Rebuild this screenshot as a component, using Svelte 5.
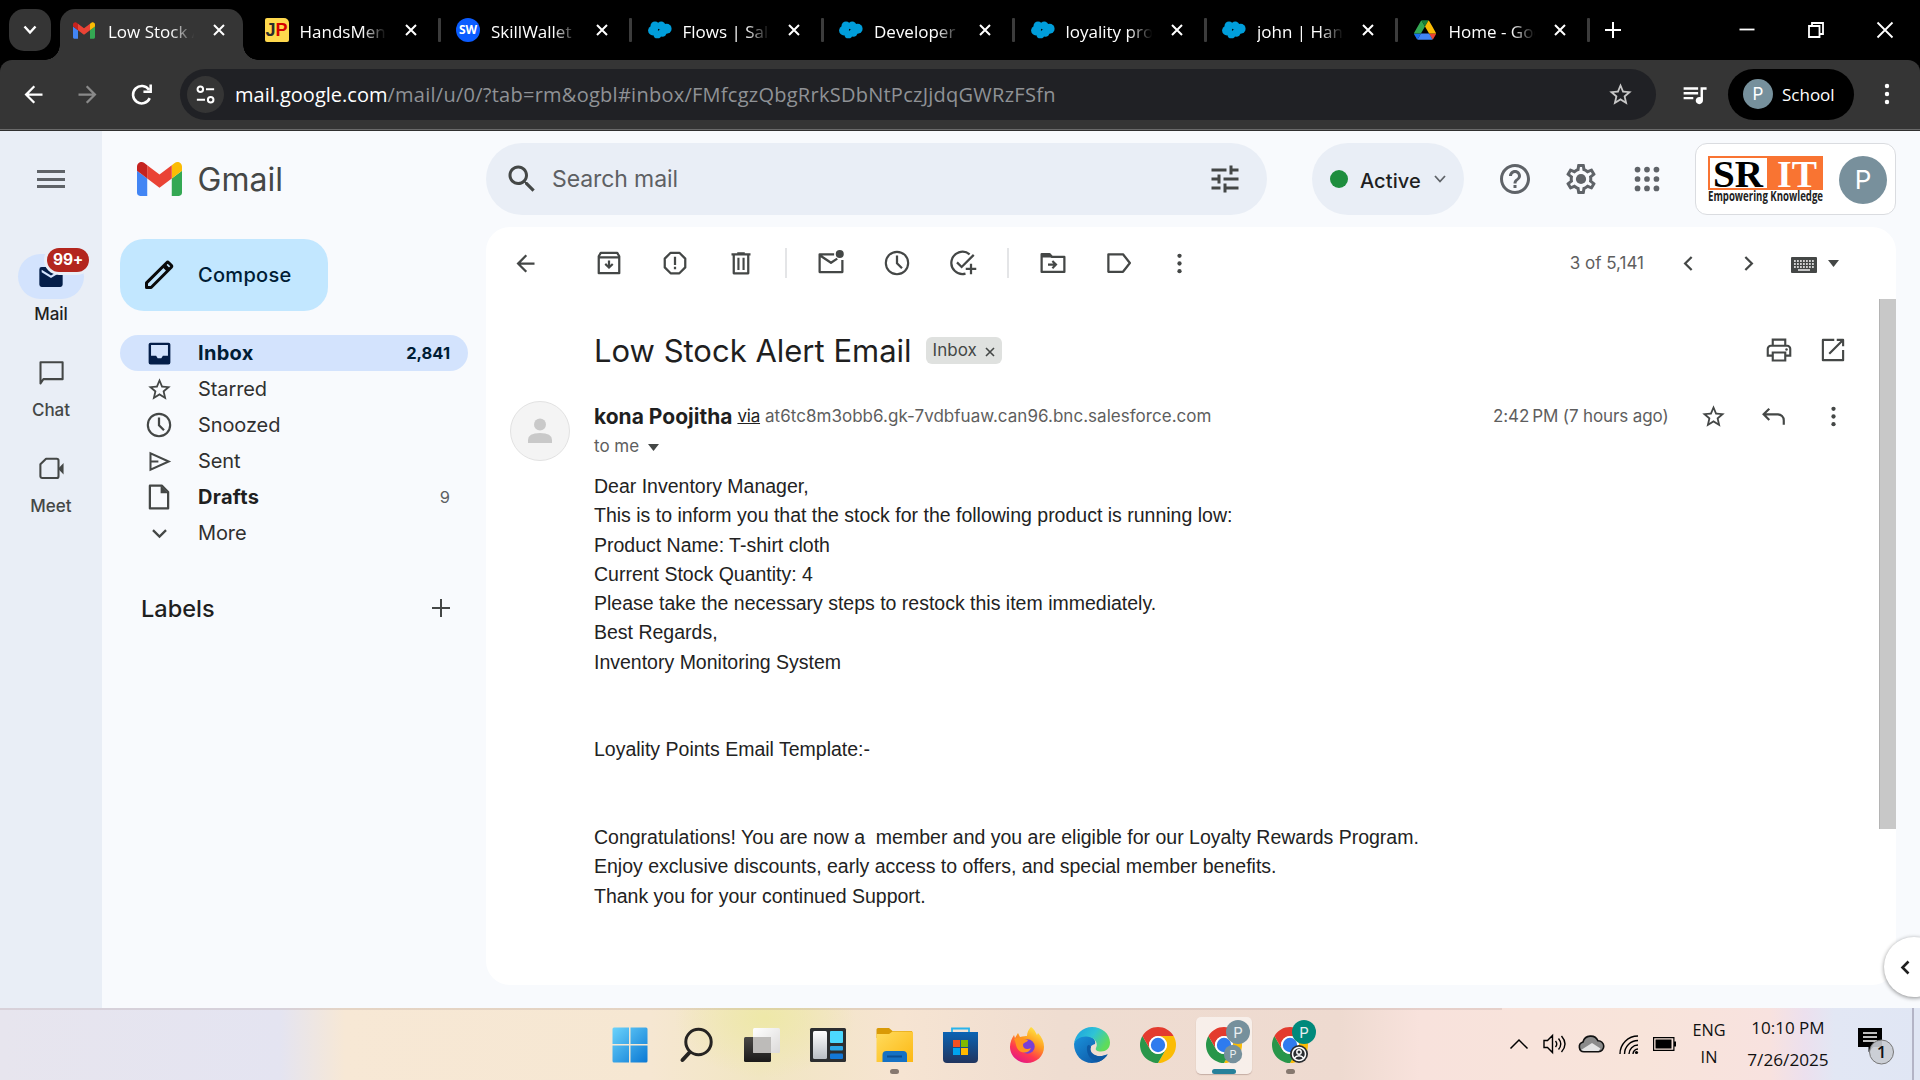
<script>
  const tabs = [
    { icon: 'gmail', title: 'Low Stock Alert', active: true },
    { icon: 'jp', title: 'HandsMen T' },
    { icon: 'sw', title: 'SkillWallet' },
    { icon: 'cloud', title: 'Flows | Salesforce' },
    { icon: 'cloud', title: 'Developer C' },
    { icon: 'cloud', title: 'loyality process' },
    { icon: 'cloud', title: 'john | Hands' },
    { icon: 'drive', title: 'Home - Google' },
  ];

  const folders = [
    { icon: 'inbox', name: 'Inbox', count: '2,841', selected: true, bold: true },
    { icon: 'star', name: 'Starred' },
    { icon: 'clock', name: 'Snoozed' },
    { icon: 'send', name: 'Sent' },
    { icon: 'draft', name: 'Drafts', count: '9', bold: true },
    { icon: 'down', name: 'More' },
  ];

  const actions = ['archive', 'spam', 'trash', '|', 'unread', 'clock', 'task', '|', 'move', 'label', 'dots'];

  const body = [
    'Dear Inventory Manager,',
    'This is to inform you that the stock for the following product is running low:',
    'Product Name: T-shirt cloth',
    'Current Stock Quantity: 4',
    'Please take the necessary steps to restock this item immediately.',
    'Best Regards,',
    'Inventory Monitoring System',
    '',
    '',
    'Loyality Points Email Template:-',
    '',
    '',
    'Congratulations! You are now a  member and you are eligible for our Loyalty Rewards Program.',
    'Enjoy exclusive discounts, early access to offers, and special member benefits.',
    'Thank you for your continued Support.',
  ];

  const apps = ['windows', 'find', 'taskview', 'widgets', 'files', 'store', 'firefox', 'edge', 'chrome', 'chromeA', 'chromeB'];
</script>

{#snippet gmail()}
  <path fill="#4285f4" d="M58 108h14V74L52 59v43c0 3.32 2.69 6 6 6" />
  <path fill="#34a853" d="M120 108h14c3.32 0 6-2.69 6-6V59l-20 15" />
  <path fill="#fbbc04" d="M120 48v26l20-15v-8c0-7.42-8.47-11.65-14.4-7.2" />
  <path fill="#ea4335" d="M72 74V48l24 18 24-18v26L96 92" />
  <path fill="#c5221f" d="M52 51v8l20 15V48l-5.6-4.2c-5.94-4.45-14.4-.22-14.4 7.2" />
{/snippet}

{#snippet favicon(name)}
  {#if name === 'gmail'}
    <svg width="22" height="17" viewBox="52 42 88 66">{@render gmail()}</svg>
  {:else if name === 'jp'}
    <span class="jp"><b>J</b><b class="p">P</b></span>
  {:else if name === 'sw'}
    <span class="sw">SW</span>
  {:else if name === 'cloud'}
    <svg width="24" height="18" viewBox="0 0 24 18" fill="#009edb">
      <circle cx="5" cy="9.6" r="4.9" /><circle cx="7" cy="5" r="4.5" /><circle cx="13.2" cy="4.6" r="4.2" />
      <circle cx="18.6" cy="7.8" r="5" /><circle cx="14.4" cy="11.6" r="4.2" /><circle cx="9.4" cy="13.4" r="3.9" />
    </svg>
  {:else}
    <svg width="22" height="20" viewBox="0 0 87.3 78">
      <path fill="#1a6ff0" d="m6.6 66.85 3.85 6.65c.8 1.4 1.95 2.5 3.3 3.3l13.75-23.8H0c0 1.55.4 3.1 1.2 4.5z" />
      <path fill="#34a853" d="M43.65 25 29.9 1.2c-1.35.8-2.5 1.9-3.3 3.3l-25.4 44A9.06 9.06 0 0 0 0 53h27.5z" />
      <path fill="#ea4335" d="M73.55 76.8c1.35-.8 2.5-1.9 3.3-3.3l1.6-2.75L86.1 57.5c.8-1.4 1.2-2.95 1.2-4.5H59.8l5.85 11.5z" />
      <path fill="#188038" d="M43.65 25 57.4 1.2C56.05.4 54.5 0 52.9 0H34.4c-1.6 0-3.15.45-4.5 1.2z" />
      <path fill="#4285f4" d="M59.8 53H27.5L13.75 76.8c1.35.8 2.9 1.2 4.5 1.2h50.8c1.6 0 3.15-.45 4.5-1.2z" />
      <path fill="#fbbc04" d="m73.4 26.5-12.7-22c-.8-1.4-1.95-2.5-3.3-3.3L43.65 25 59.8 53h27.45c0-1.55-.4-3.1-1.2-4.5z" />
    </svg>
  {/if}
{/snippet}

{#snippet icon(name, size = 30)}
  <svg width={size} height={size} viewBox="0 0 24 24" fill="currentColor">
    {#if name === 'star'}
      <path d="M22 9.24l-7.19-.62L12 2 9.19 8.63 2 9.24l5.46 4.73L5.82 21 12 17.27 18.18 21l-1.63-7.03L22 9.24zM12 15.4l-3.76 2.27 1-4.28-3.32-2.88 4.38-.38L12 6.1l1.71 4.04 4.38.38-3.32 2.88 1 4.28L12 15.4z" />
    {:else if name === 'back'}
      <path d="M20 11H7.83l5.59-5.59L12 4l-8 8 8 8 1.41-1.41L7.83 13H20v-2z" />
    {:else if name === 'forward'}
      <path d="M4 11h12.17l-5.59-5.59L12 4l8 8-8 8-1.41-1.41L16.17 13H4v-2z" />
    {:else if name === 'reload'}
      <path fill="none" stroke="currentColor" stroke-width="2.1" d="M18.8 15a7.2 7.2 0 1 1-.6-6.8M19.6 3.8v6h-6" />
    {:else if name === 'site'}
      <path fill="none" stroke="currentColor" stroke-width="2.1" d="M12.5 6.5H21M3 17.5h8.5" />
      <circle cx="6.6" cy="6.5" r="2.9" fill="none" stroke="currentColor" stroke-width="2.1" />
      <circle cx="17.4" cy="17.5" r="2.9" fill="none" stroke="currentColor" stroke-width="2.1" />
    {:else if name === 'music'}
      <path d="M15 6H3v2h12V6zm0 4H3v2h12v-2zM3 16h8v-2H3v2zM17 6v8.18c-.31-.11-.65-.18-1-.18-1.66 0-3 1.34-3 3s1.34 3 3 3 3-1.34 3-3V8h3V6h-5z" />
    {:else if name === 'dots'}
      <circle cx="12" cy="5.2" r="1.9" /><circle cx="12" cy="12" r="1.9" /><circle cx="12" cy="18.8" r="1.9" />
    {:else if name === 'search'}
      <path d="M15.5 14h-.79l-.28-.27C15.41 12.59 16 11.11 16 9.5 16 5.91 13.09 3 9.5 3S3 5.91 3 9.5 5.91 16 9.5 16c1.61 0 3.09-.59 4.23-1.57l.27.28v.79l5 4.99L20.49 19l-4.99-5zm-6 0C7.01 14 5 11.99 5 9.5S7.01 5 9.5 5 14 7.01 14 9.5 11.99 14 9.5 14z" />
    {:else if name === 'tune'}
      <path d="M3 17v2h6v-2H3zM3 5v2h10V5H3zm10 16v-2h8v-2h-8v-2h-2v6h2zM7 9v2H3v2h4v2h2V9H7zm14 4v-2H11v2h10zm-6-4h2V7h4V5h-4V3h-2v6z" />
    {:else if name === 'help'}
      <path d="M11 18h2v-2h-2v2zm1-16C6.48 2 2 6.48 2 12s4.48 10 10 10 10-4.48 10-10S17.52 2 12 2zm0 18c-4.41 0-8-3.59-8-8s3.59-8 8-8 8 3.59 8 8-3.59 8-8 8zm0-14c-2.21 0-4 1.79-4 4h2c0-1.1.9-2 2-2s2 .9 2 2c0 2-3 1.75-3 5h2c0-2.25 3-2.5 3-5 0-2.21-1.79-4-4-4z" />
    {:else if name === 'gear'}
      <path d="M19.43 12.98c.04-.32.07-.64.07-.98 0-.34-.03-.66-.07-.98l2.11-1.65c.19-.15.24-.42.12-.64l-2-3.46c-.09-.16-.26-.25-.44-.25-.06 0-.12.01-.17.03l-2.49 1c-.52-.4-1.08-.73-1.69-.98l-.38-2.65C14.46 2.18 14.25 2 14 2h-4c-.25 0-.46.18-.49.42l-.38 2.65c-.61.25-1.17.59-1.69.98l-2.49-1c-.06-.02-.12-.03-.18-.03-.17 0-.34.09-.43.25l-2 3.46c-.13.22-.07.49.12.64l2.11 1.65c-.04.32-.07.65-.07.98 0 .33.03.66.07.98l-2.11 1.65c-.19.15-.24.42-.12.64l2 3.46c.09.16.26.25.44.25.06 0 .12-.01.17-.03l2.49-1c.52.4 1.08.73 1.69.98l.38 2.65c.03.24.24.42.49.42h4c.25 0 .46-.18.49-.42l.38-2.65c.61-.25 1.17-.59 1.69-.98l2.49 1c.06.02.12.03.18.03.17 0 .34-.09.43-.25l2-3.46c.12-.22.07-.49-.12-.64l-2.11-1.65zm-1.98-1.71c.04.31.05.52.05.73 0 .21-.02.43-.05.73l-.14 1.13.89.7 1.08.84-.7 1.21-1.27-.51-1.04-.42-.9.68c-.43.32-.84.56-1.25.73l-1.06.43-.16 1.13-.2 1.35h-1.4l-.19-1.35-.16-1.13-1.06-.43c-.43-.18-.83-.41-1.23-.71l-.91-.7-1.06.43-1.27.51-.7-1.21 1.08-.84.89-.7-.14-1.13c-.03-.31-.05-.54-.05-.74s.02-.43.05-.73l.14-1.13-.89-.7-1.08-.84.7-1.21 1.27.51 1.04.42.9-.68c.43-.32.84-.56 1.25-.73l1.06-.43.16-1.13.2-1.35h1.39l.19 1.35.16 1.13 1.06.43c.43.18.83.41 1.23.71l.91.7 1.06-.43 1.27-.51.7 1.21-1.07.85-.89.7.14 1.13z" />
      <circle cx="12" cy="12" r="3.4" />
    {:else if name === 'grid'}
      {#each [5.7, 12, 18.3] as y}{#each [5.7, 12, 18.3] as x}<circle cx={x} cy={y} r="1.9" />{/each}{/each}
    {:else if name === 'inbox'}
      <path fill-rule="evenodd" d="M4.6 3h14.8A1.6 1.6 0 0 1 21 4.6v14.8a1.6 1.6 0 0 1-1.6 1.6H4.6A1.6 1.6 0 0 1 3 19.4V4.6A1.6 1.6 0 0 1 4.6 3zM5 5v8.8h4.2l1.3 2.2h3l1.3-2.2H19V5z" />
    {:else if name === 'clock'}
      <path d="M12 2.2a9.8 9.8 0 1 0 0 19.6 9.8 9.8 0 0 0 0-19.6zm0 17.9a8.1 8.1 0 1 1 0-16.2 8.1 8.1 0 0 1 0 16.2z" />
      <path fill="none" stroke="currentColor" stroke-width="1.8" d="M12 6v6.2l4 4" />
    {:else if name === 'send'}
      <path fill="none" stroke="currentColor" stroke-width="1.8" d="M4 4.8v14.4L20.2 12zM4 12h7" />
    {:else if name === 'draft'}
      <path fill="none" stroke="currentColor" stroke-width="1.8" stroke-linejoin="round" d="M4.7 2.9h9.5l5.1 5.1v13.1H4.7z" />
      <path d="M13.3 2.9v6h6z" />
    {:else if name === 'down'}
      <path fill="none" stroke="currentColor" stroke-width="2" d="M6.2 9l5.8 5.8L17.800 9" />
    {:else if name === 'plus'}
      <path d="M11.2 4.8h1.6v6.4h6.4v1.6h-6.4v6.4h-1.6v-6.4H4.8v-1.6h6.4z" />
    {:else if name === 'mail'}
      <path fill-rule="evenodd" d="M4 3.500h16a2 2 0 0 1 2 2v13a2 2 0 0 1-2 2H4a2 2 0 0 1-2-2v-13a2 2 0 0 1 2-2zM4 5.800v2.100l8 5 8-5V5.800l-8 4.900z" />
    {:else if name === 'chat'}
      <path fill="none" stroke="currentColor" stroke-width="1.7" stroke-linejoin="round" d="M2.900 21V3.500h18.300v14H5.300z" />
    {:else if name === 'meet'}
      <path fill="none" stroke="currentColor" stroke-width="1.7" stroke-linejoin="round" d="M7.500 3.900h8.800a1.500 1.500 0 0 1 1.500 1.500v13a1.500 1.500 0 0 1-1.500 1.500H4.300a1.500 1.500 0 0 1-1.500-1.500V8.500z" />
      <path d="M17.400 12.200L22 7.400v9.600z" />
    {:else if name === 'archive'}
      <path fill="none" stroke="currentColor" stroke-width="1.8" stroke-linejoin="round" d="M3.800 6.600l1.600-2.700h13.200l1.600 2.700v13.500H3.800zM3.800 7.400h16.400" />
      <path d="M11.100 10h1.800v3.600l1.500-1.500 1.200 1.200-3.600 3.500-3.600-3.500 1.200-1.200 1.500 1.500z" />
    {:else if name === 'spam'}
      <path fill="none" stroke="currentColor" stroke-width="1.8" stroke-linejoin="round" d="M8.500 3.800h7l4.700 4.700v7l-4.700 4.700h-7l-4.700-4.700v-7z" />
      <path d="M11.100 7h1.800v6.500h-1.800zM11.100 15h1.800v2h-1.800z" />
    {:else if name === 'trash'}
      <path fill="none" stroke="currentColor" stroke-width="1.8" stroke-linejoin="round" d="M6.200 5.500v14.700h11.600V5.500M4.400 5h15.200M9 4.200h6" />
      <path d="M9.100 7.800h1.700v9.800H9.100zM13.200 7.800h1.700v9.800h-1.700z" />
    {:else if name === 'unread'}
      <path fill="none" stroke="currentColor" stroke-width="1.8" stroke-linejoin="round" d="M14.500 5H2.900v14.200h18.200V9.500M3 5.800l9 6 5-3.300" />
      <circle cx="19" cy="4.800" r="3.200" />
    {:else if name === 'task'}
      <path fill="none" stroke="currentColor" stroke-width="1.8" d="M17.300 5.100A8.900 8.900 0 1 0 14 20.500M7.200 11.500l3.700 3.700L20.600 5.500M18.400 12.500v8.400M14.200 16.700h8.400" />
    {:else if name === 'move'}
      <path fill="none" stroke="currentColor" stroke-width="1.8" stroke-linejoin="round" d="M2.900 4.900h6.300l2 2.200h9.900v12H2.900z" />
      <path d="M2.900 4.900h6.300l2 2.700H2.900zM8 12.300h4.300l-1.400-1.400 1.200-1.200 3.500 3.500-3.500 3.500-1.200-1.200 1.400-1.400H8z" />
    {:else if name === 'label'}
      <path fill="none" stroke="currentColor" stroke-width="1.8" stroke-linejoin="round" d="M3.500 5h11.700l5.500 7-5.500 7H3.500z" />
    {:else if name === 'left'}
      <path fill="none" stroke="currentColor" stroke-width="2" d="M14.800 6.200L9 12l5.800 5.800" />
    {:else if name === 'right'}
      <path fill="none" stroke="currentColor" stroke-width="2" d="M9.200 6.200L15 12l-5.800 5.800" />
    {:else if name === 'print'}
      <path fill="none" stroke="currentColor" stroke-width="1.7" d="M7 8V3.700h10V8M6.500 16.500H3V11a2.400 2.400 0 0 1 2.400-2.400h13.200A2.400 2.400 0 0 1 21 11v5.500h-3.500M7 14h10v6.400H7z" />
      <circle cx="18" cy="11.600" r="1" />
    {:else if name === 'open'}
      <path fill="none" stroke="currentColor" stroke-width="1.7" stroke-linejoin="round" d="M13 3.900H3.900v16.200h16.200V12M15 3.900h5.100V9M20 4L9 15" />
    {:else if name === 'reply'}
      <path fill="none" stroke="currentColor" stroke-width="1.8" d="M8.500 5.500L3.800 10.200l4.700 4.700M3.800 10.200h11.700a5 5 0 0 1 5 5v3.600" />
    {/if}
  </svg>
{/snippet}

{#snippet close()}
  <svg width="12" height="12" viewBox="0 0 12 12" stroke="#fff" stroke-width="2"><path d="M1 1l10 10M11 1L1 11" /></svg>
{/snippet}

{#snippet chromeDisc()}
  <path fill="#fbbc04" d="M24 12h20.780A24 24 0 0 1 24 48l10.390-18A12 12 0 0 0 24 12z" />
  <path fill="#28964a" d="M34.390 30L24 48A24 24 0 0 1 3.220 12l10.390 18a12 12 0 0 0 20.780 0z" />
  <path fill="#e33b2e" d="M13.610 30L3.220 12a24 24 0 0 1 41.560 0H24a12 12 0 0 0-10.390 18z" />
  <circle cx="24" cy="24" r="12" fill="#fff" />
  <circle cx="24" cy="24" r="9.600" fill="#2f7bee" />
{/snippet}

{#snippet app(name)}
  {#if name === 'windows'}
    <svg width="36" height="36" viewBox="0 0 36 36">
      <defs><linearGradient id="win" x1="0" y1="0" x2="1" y2="1"><stop offset="0" stop-color="#6bd3fb" /><stop offset="1" stop-color="#0a78d4" /></linearGradient></defs>
      <path fill="url(#win)" d="M2 .5h15v16.500H.5V2A1.500 1.500 0 0 1 2 .5zM18.500.5H34A1.500 1.500 0 0 1 35.500 2v15h-17zM.5 18.500H17v17H2A1.500 1.500 0 0 1 .5 34zM18.500 18.500h17V34a1.500 1.500 0 0 1-1.500 1.500H18.500z" />
    </svg>
  {:else if name === 'find'}
    <svg width="34" height="36" viewBox="0 0 34 36" fill="none" stroke="#262422">
      <circle cx="19.500" cy="15" r="12.700" stroke-width="3" /><path stroke-width="4" stroke-linecap="round" d="M10.500 25.500L3.500 33" />
    </svg>
  {:else if name === 'taskview'}
    <svg width="36" height="36" viewBox="0 0 36 36">
      <defs>
        <linearGradient id="tv1" x1="0" y1="0" x2="0" y2="1"><stop offset="0" stop-color="#4a4846" /><stop offset="1" stop-color="#1b1a19" /></linearGradient>
        <linearGradient id="tv2" x1="0" y1="0" x2="1" y2="1"><stop offset="0" stop-color="#fff" /><stop offset="1" stop-color="#dcdad9" /></linearGradient>
      </defs>
      <rect x="0" y="10" width="27" height="25" rx="1.500" fill="url(#tv1)" />
      <rect x="9" y="1" width="27" height="25" rx="1.500" fill="url(#tv2)" />
      <path fill="#bdbbb9" d="M9 10h18v16H10.500A1.500 1.500 0 0 1 9 24.500z" />
    </svg>
  {:else if name === 'widgets'}
    <svg width="36" height="34" viewBox="0 0 36 34">
      <defs><linearGradient id="wd" x1="0" y1="0" x2="0" y2="1"><stop offset="0" stop-color="#fff" /><stop offset="1" stop-color="#b9bec4" /></linearGradient></defs>
      <rect width="36" height="34" rx="1.500" fill="#2c2e30" />
      <rect x="3" y="3" width="14" height="28" rx="1.500" fill="url(#wd)" />
      <rect x="20" y="3" width="13" height="12" rx="1" fill="#4cd9ff" /><rect x="20" y="18" width="13" height="4.500" rx="1" fill="#2ba8e8" /><rect x="20" y="25.500" width="13" height="5.500" rx="1" fill="#1277d6" />
    </svg>
  {:else if name === 'files'}
    <svg width="37" height="34" viewBox="0 0 37 34">
      <defs><linearGradient id="fl" x1="0" y1="0" x2="1" y2="1"><stop offset="0" stop-color="#ffdc5e" /><stop offset="1" stop-color="#fdb813" /></linearGradient></defs>
      <path fill="#d99a06" d="M2 0h11l3.500 3H36v7H.5V1.500A1.500 1.500 0 0 1 2 0z" />
      <path fill="url(#fl)" d="M.5 6H13l3.500-2.500H36A1 1 0 0 1 37 4.500V34H.5z" />
      <path fill="#1571c4" d="M6.500 34V27q0-4 4-4H27q4 0 4 4v7z" /><path fill="#0c4f92" d="M11 27.500h15v2H11z" />
    </svg>
  {:else if name === 'store'}
    <svg width="35" height="36" viewBox="0 0 35 36">
      <defs><linearGradient id="st" x1="0" y1="0" x2="0" y2="1"><stop offset="0" stop-color="#0a63b4" /><stop offset="1" stop-color="#21355e" /></linearGradient></defs>
      <path fill="none" stroke="#29b4ec" stroke-width="1.800" d="M9 7V1.500h17V7" />
      <path fill="url(#st)" d="M0 5h35v27a4 4 0 0 1-4 4H4a4 4 0 0 1-4-4z" />
      <path fill="#f25022" d="M10 13h7v7h-7z" /><path fill="#7fba00" d="M18 13h7v7h-7z" /><path fill="#00a4ef" d="M10 21h7v7h-7z" /><path fill="#ffb900" d="M18 21h7v7h-7z" />
    </svg>
  {:else if name === 'firefox'}
    <svg width="35" height="36" viewBox="0 0 35 36">
      <defs>
        <linearGradient id="ff" x1=".8" y1="0" x2=".25" y2="1"><stop offset="0" stop-color="#fff04a" /><stop offset=".4" stop-color="#ff9a1f" /><stop offset=".7" stop-color="#ff3a4e" /><stop offset="1" stop-color="#e2148c" /></linearGradient>
      </defs>
      <path fill="url(#ff)" d="M22 0c4 3 5 6 6 8l1-2c4 4 6 9 6 14 0 9-7.500 16-17 16S1 28.500 1 20c0-5 2-9 4-12l1 3 3-5 2 4c3-1 6-1 7-1 0-4 2-7 4-9z" />
      <circle cx="18.500" cy="19.500" r="7.200" fill="#7a3fd6" />
      <path fill="#ff9420" d="M5 12c5-2.500 8-2 10 0l4 1c-1 3-5 2-5 5 0 4 4 5 8 3-2 6-11 6-14 0-1.500-3-1-6-3-9z" />
    </svg>
  {:else if name === 'edge'}
    <svg width="36" height="36" viewBox="0 0 36 36">
      <defs>
        <linearGradient id="e1" x1="0" y1="0" x2="1" y2=".5"><stop offset="0" stop-color="#1b9de0" /><stop offset=".55" stop-color="#2fc3d6" /><stop offset="1" stop-color="#5fdc5a" /></linearGradient>
        <linearGradient id="e2" x1="0" y1="0" x2="1" y2="1"><stop offset="0" stop-color="#1a93dc" /><stop offset="1" stop-color="#0c4f9e" /></linearGradient>
      </defs>
      <path fill="url(#e2)" d="M0 17C2 9 9 8 14 9c6 1 8 5 7 8-6 1-7 8-1 11 5 2.500 10 1 13-1-3 6-8 9-15 9C8 36 0 28 0 17z" />
      <path fill="#0c59a4" d="M13 20c-1 8 5 15 12 14.500 4-1.500 7-4 9-7.500-3 2-8 3.500-13 1-4-2-5-5-4-8-1-2-3-3-4 0z" />
      <path fill="url(#e1)" d="M0 17C1 7 9 0 18 0c10 0 18 7 18 15.500 0 6-4 9-9 9-4 0-6-1.500-5-3.500 3-6-3-11.500-10-11.500C6 9.500 1 13 0 17z" />
    </svg>
  {:else if name === 'chrome'}
    <svg width="36" height="36" viewBox="0 0 48 48">{@render chromeDisc()}</svg>
  {:else}
    <svg width="56" height="56" viewBox="0 0 56 56">
      <svg x="10" y="10" width="36" height="36" viewBox="0 0 48 48">{@render chromeDisc()}</svg>
      {#if name === 'chromeA'}
        <circle cx="42" cy="15" r="12" fill="#76909c" /><text class="av" x="42" y="20.500" font-size="15">P</text>
        <circle cx="37" cy="37" r="9.200" fill="#76909c" /><text class="av" x="37" y="41" font-size="11">P</text>
      {:else}
        <circle cx="42" cy="15" r="12" fill="#00897b" /><text class="av" x="42" y="20.500" font-size="15">P</text>
        <circle cx="37" cy="37" r="9" fill="#2a2d31" /><circle cx="37" cy="37" r="6.500" fill="none" stroke="#fff" stroke-width="1.500" />
        <circle cx="37" cy="35" r="2.200" fill="none" stroke="#fff" stroke-width="1.400" /><path fill="none" stroke="#fff" stroke-width="1.400" d="M32.500 41c2-3 7-3 9 0" />
      {/if}
    </svg>
  {/if}
{/snippet}

<div class="screen">
  <div class="strip">
    <div class="tabsearch">
      <svg width="14" height="10" viewBox="0 0 14 10" fill="none" stroke="#fff" stroke-width="2.400"><path d="M1.500 1.500L7 7.500l5.500-6" /></svg>
    </div>
    {#each tabs as tab}
      <div class="tab" class:active={tab.active}>
        <div class="tabinner">
          <span class="fav">{@render favicon(tab.icon)}</span>
          <span class="tabtitle">{tab.title}</span>
          {@render close()}
        </div>
        {#if !tab.active}<i class="tabsep"></i>{/if}
      </div>
    {/each}
    <svg class="newtab" width="16" height="16" viewBox="0 0 16 16" stroke="#fff" stroke-width="2"><path d="M8 0v16M0 8h16" /></svg>
    <div class="winctl">
      <svg width="16" height="16" viewBox="0 0 16 16" stroke="#fff" stroke-width="1.800"><path d="M.5 7.500h15" /></svg>
      <svg width="16" height="16" viewBox="0 0 16 16" fill="none" stroke="#fff" stroke-width="1.800"><path d="M1 4h10.500v11H1zM4 4V1h11v11h-3.500" /></svg>
      <svg width="16" height="16" viewBox="0 0 16 16" stroke="#fff" stroke-width="1.800"><path d="M.5.5l15 15M15.500.5l-15 15" /></svg>
    </div>
  </div>

  <div class="navwrap">
    <div class="navbar">
      <span class="nb">{@render icon('back', 27)}</span>
      <span class="nb dim">{@render icon('forward', 27)}</span>
      <span class="nb">{@render icon('reload', 29)}</span>
      <div class="omnibox">
        <span class="site">{@render icon('site', 23)}</span>
        <span class="host">mail.google.com</span><span class="path">/mail/u/0/?tab=rm&ogbl#inbox/FMfcgzQbgRrkSDbNtPczJjdqGWRzFSfn</span>
        <span class="bookmark">{@render icon('star', 27)}</span>
      </div>
      <span class="music">{@render icon('music', 29)}</span>
      <div class="profile"><span class="pav">P</span>School</div>
      <span class="menu">{@render icon('dots', 28)}</span>
    </div>
  </div>

  <div class="page">
    <nav class="rail">
      <div class="burger"><i></i><i></i><i></i></div>
      <div class="railitem on">
        <span class="pill">{@render icon('mail', 28)}<b class="badge">99+</b></span>
        <span class="raillabel">Mail</span>
      </div>
      <div class="railitem"><span class="pill">{@render icon('chat', 29)}</span><span class="raillabel">Chat</span></div>
      <div class="railitem"><span class="pill">{@render icon('meet', 29)}</span><span class="raillabel">Meet</span></div>
    </nav>

    <div class="main">
      <header>
        <div class="brand"><svg width="45" height="34" viewBox="52 42 88 66">{@render gmail()}</svg><span>Gmail</span></div>
        <div class="search">
          {@render icon('search', 36)}<span class="ph">Search mail</span>{@render icon('tune', 36)}
        </div>
        <div class="status"><i></i><span>Active</span><svg width="12" height="8" viewBox="0 0 12 8" fill="none" stroke="#5f6368" stroke-width="1.800"><path d="M1 1l5 5.500L11 1" /></svg></div>
        <div class="tools">
          {@render icon('help', 36)}{@render icon('gear', 36)}{@render icon('grid', 36)}
        </div>
        <div class="account">
          <svg width="115" height="48" viewBox="0 0 115 48">
            <path fill="#f97432" d="M0 0h115v34H0z" /><path fill="#fff" d="M2 2h57v30H2z" />
            <text class="logo" x="5" y="30.500" textLength="50" lengthAdjust="spacingAndGlyphs">SR</text>
            <text class="logo it" x="69" y="30.500" textLength="40" lengthAdjust="spacingAndGlyphs">IT</text>
            <text class="tagline" x="0" y="44.500" textLength="115" lengthAdjust="spacingAndGlyphs">Empowering Knowledge</text>
          </svg>
          <span class="avatar">P</span>
        </div>
      </header>

      <div class="columns">
        <aside>
          <div class="compose">
            <svg width="30" height="30" viewBox="0 0 30 30" fill="none" stroke="#0a0a0a" stroke-width="3" stroke-linejoin="round"><path d="M2.500 27.500v-4.600L22.700 2.700q1-1 2 0l2.600 2.600q1 1 0 2L7.100 27.500z" /><path d="M20 5.500L24.500 10" stroke-width="4.500" /></svg>
            <span>Compose</span>
          </div>
          {#each folders as f}
            <div class="folder" class:selected={f.selected} class:bold={f.bold}>
              <span class="ficon">{@render icon(f.icon, f.icon === 'clock' || f.icon === 'draft' ? 30 : f.icon === 'inbox' ? 29 : 27)}</span>
              <span class="fname">{f.name}</span>
              <span class="fcount">{f.count ?? ''}</span>
            </div>
          {/each}
          <div class="labels"><span>Labels</span>{@render icon('plus', 30)}</div>
        </aside>

        <section class="card">
          <div class="toolbar">
            <span class="tb first">{@render icon('back', 27)}</span>
            {#each actions as a}
              {#if a === '|'}<i class="vsep"></i>{:else}<span class="tb" class:narrow={a === 'dots'}>{@render icon(a, a === 'dots' ? 27 : 30)}</span>{/if}
            {/each}
            <span class="pos">3 of 5,141</span>
            <span class="pg">{@render icon('left', 27)}</span>
            <span class="pg">{@render icon('right', 27)}</span>
            <svg class="kbd" width="26" height="16" viewBox="0 0 26 16">
              <rect width="26" height="16" rx="1" fill="#444746" />
              <path stroke="#fff" stroke-width="1.300" stroke-dasharray="1.800 1.200" d="M3 4h20M3 7h20M3 10h20" /><path stroke="#fff" stroke-width="1.400" d="M7 13h12" />
            </svg>
            <svg class="kbdmenu" width="11" height="7" viewBox="0 0 11 7" fill="#444746"><path d="M0 0h11L5.500 7z" /></svg>
          </div>

          <div class="mail">
            <div class="content">
              <div class="subject">
                <h1>Low Stock Alert Email</h1>
                <span class="chip">Inbox<svg width="10" height="10" viewBox="0 0 10 10" stroke="#444746" stroke-width="1.600"><path d="M1 1l8 8M9 1L1 9" /></svg></span>
                <span class="subicons">{@render icon('print', 30)}{@render icon('open', 30)}</span>
              </div>
              <div class="sender">
                <span class="person">
                  <svg width="26" height="26" viewBox="0 0 26 26" fill="#c9c9c9"><circle cx="13" cy="6.500" r="6" /><path d="M1 25v-3q0-7 12-7t12 7v3z" /></svg>
                </span>
                <div class="who">
                  <div class="line"><b>kona Poojitha</b><u>via</u><span class="addr">at6tc8m3obb6.gk-7vdbfuaw.can96.bnc.salesforce.com</span></div>
                  <div class="line to">to me<svg width="11" height="7" viewBox="0 0 11 7" fill="#444746"><path d="M0 0h11L5.500 7z" /></svg></div>
                </div>
                <div class="meta"><span>2:42&#8239;PM (7 hours ago)</span>{@render icon('star', 27)}{@render icon('reply', 29)}{@render icon('dots', 27)}</div>
              </div>
              <div class="text">
                {#each body as line}<p>{line}</p>{/each}
              </div>
            </div>
            <i class="scroll"></i>
          </div>
        </section>
      </div>
    </div>
    <div class="panel"><svg width="10" height="15" viewBox="0 0 10 15" fill="none" stroke="#1f1f1f" stroke-width="2.600"><path d="M8.500 1.500l-6 6 6 6" /></svg></div>
  </div>

  <div class="taskbar">
    <i class="topline"></i>
    <div class="apps">
      {#each apps as a}
        <div class="app" class:current={a === 'chromeA'}>{@render app(a)}{#if ['files', 'chromeA', 'chromeB'].includes(a)}<i></i>{/if}</div>
      {/each}
    </div>
    <div class="tray">
      <svg width="18" height="10" viewBox="0 0 18 10" fill="none" stroke="#000" stroke-width="1.500"><path d="M.5 9.500L9 1l8.500 8.500" /></svg>
      <svg class="vol" width="24" height="20" viewBox="0 0 24 20" fill="none" stroke="#000" stroke-width="1.400"><path d="M1 6.500h3.500L9.500 1.500v17l-5-5H1zM12.500 7q2.500 3 0 6M15.500 4.500q4.500 5.500 0 11M18.500 2q7 8 0 16" /></svg>
      <svg class="sync" width="26" height="18" viewBox="0 0 26 18"><path fill="#8b8b8b" stroke="#111" stroke-width="1.600" d="M6 16.800a5 5 0 0 1-1-9.800 8 8 0 0 1 15-1.200 5.500 5.500 0 0 1 .5 11z" /><path fill="#e4e4e4" d="M3 15l11-7 8.500 5.500-2 2.500H6z" /></svg>
      <svg class="wifi" width="20" height="20" viewBox="0 0 20 20" fill="none" stroke="#000" stroke-width="1.400"><path d="M1 19A18 18 0 0 1 19 1M5.500 19A13.500 13.500 0 0 1 19 5.500M10 19a9 9 0 0 1 9-9" /><path d="M14 19a5 5 0 0 1 5-5" /><circle cx="17.500" cy="17.500" r="1.600" fill="#000" stroke="none" /></svg>
      <svg class="battery" width="23" height="14" viewBox="0 0 23 14"><path fill="none" stroke="#000" stroke-width="1.200" d="M.6.6h20.300v12.800H.6z" /><path d="M2.500 2.500h16v9h-16zM21 4.500h2v5h-2z" /></svg>
      <div class="lang"><span>ENG</span><span>IN</span></div>
      <div class="when"><span>10:10 PM</span><span class="date">7/26/2025</span></div>
      <svg class="note" width="36" height="37" viewBox="0 0 36 37">
        <path d="M0 0h24v19h-8.500l-5 5v-5H0z" /><path stroke="#fff" stroke-width="1.500" d="M5 5h14M5 9h14M5 13h14" />
        <circle cx="23.500" cy="24" r="12" fill="#c9ccd3" fill-opacity=".9" stroke="#777" /><text class="cnt" x="23.500" y="30">1</text>
      </svg>
    </div>
  </div>
</div>

<style>
  :global(body) { margin: 0; }
  * { box-sizing: border-box; }
  svg { display: block; flex: none; overflow: visible; }
  .screen { width: 1920px; height: 1080px; overflow: hidden; display: flex; flex-direction: column; font-family: Inter, Roboto, sans-serif; color: #1f1f1f; background: #f8fafd; white-space: nowrap; }

  /* Browser chrome */
  .strip { height: 60px; flex: none; background: #000; display: flex; padding-left: 9px; color: #fff; font: 17px "Open Sans", sans-serif; }
  .tabsearch { width: 42px; height: 42px; margin: 9px 9px 0 0; border-radius: 15px; background: #353535; display: grid; place-items: center; }
  .tab { width: 191.5px; height: 60px; padding-top: 9px; display: flex; flex: none; }
  .tabinner { width: 183px; height: 51px; padding: 0 18px 9px 13px; display: flex; align-items: center; border-radius: 15px 15px 0 0; }
  .active .tabinner { background: #353535; position: relative; }
  .active .tabinner::before, .active .tabinner::after { content: ''; position: absolute; bottom: 0; width: 15px; height: 15px; }
  .active .tabinner::before { left: -15px; background: radial-gradient(circle at 0 0, transparent 14.5px, #353535 15px); }
  .active .tabinner::after { right: -15px; background: radial-gradient(circle at 100% 0, transparent 14.5px, #353535 15px); }
  .fav { width: 35px; display: flex; flex: none; }
  .tabtitle { width: 89px; margin-right: 16px; padding-top: 3px; overflow: hidden; flex: none; mask-image: linear-gradient(90deg, #000 70%, transparent 97%); }
  .tabsep { width: 3px; height: 24px; margin: 9px 0 0 3px; background: #3c3c3c; border-radius: 1px; }
  .jp { width: 24px; height: 24px; background: #ffd94d; border-radius: 2px 5px 2px 2px; display: flex; justify-content: center; font: bold 18px/24px "Liberation Sans", sans-serif; color: #2b2b2b; }
  .jp .p { color: #d60000; }
  .sw { width: 24px; height: 24px; border-radius: 50%; background: #0b5cff; font: bold 12px/24px "Open Sans", sans-serif; text-align: center; }
  .newtab { margin: 22px 0 0 13px; }
  .winctl { margin-left: auto; padding: 22px 27px 0 0; display: flex; gap: 53px; }
  .navwrap { height: 71px; flex: none; background: #000; }
  .navbar { height: 71px; border-bottom: 1px solid #303030; box-shadow: inset 0 -1px #6a6a6a; border-radius: 12px 12px 0 0; background: #353535; display: flex; align-items: center; padding: 0 0 2px 6px; color: #fff; }
  .nb { width: 54px; display: grid; place-items: center; }
  .dim { color: #8a8a8a; }
  .omnibox { width: 1476px; height: 51px; margin-left: 12px; padding: 0 22px 0 7px; border-radius: 26px; background: #202125; display: flex; align-items: center; font: 20px "Open Sans", sans-serif; }
  .site { width: 37px; height: 37px; margin-right: 11px; border-radius: 50%; background: #353535; display: grid; place-items: center; }
  .path { color: #8f9296; letter-spacing: .26px; }
  .bookmark { margin-left: auto; color: #c7c7c7; }
  .music { margin-left: 24px; }
  .profile { width: 126px; height: 51px; margin-left: 19px; padding-left: 15px; border-radius: 26px; background: #000; display: flex; align-items: center; gap: 9px; font: 17px "Open Sans", sans-serif; }
  .pav { width: 30px; height: 30px; border-radius: 50%; background: #76909c; text-align: center; font: 17px/30px Inter, sans-serif; }
  .menu { margin-left: 19px; }

  /* Rail */
  .page { height: 877px; flex: none; display: flex; position: relative; overflow: hidden; }
  .rail { width: 102px; background: #e9eef6; display: flex; flex-direction: column; align-items: center; }
  .burger { margin: 39px 0 66px; display: flex; flex-direction: column; gap: 4.5px; }
  .burger i { width: 28px; height: 3px; background: #5f6368; }
  .railitem { height: 96px; display: flex; flex-direction: column; align-items: center; color: #444746; font-size: 17px; }
  .pill { width: 66px; height: 45px; border-radius: 23px; display: grid; place-items: center; position: relative; }
  .on .pill { background: #d3e3fd; color: #041e49; }
  .on { color: #1f1f1f; }
  .raillabel { line-height: 30px; font-weight: 500; }
  .badge { position: absolute; left: 29px; top: -6px; width: 42px; height: 24px; border-radius: 12px; background: #b3261e; color: #fff; font-size: 15.5px; line-height: 24px; text-align: center; letter-spacing: -.3px; box-shadow: 0 0 0 3px #e9eef6; }

  /* Header */
  .main { flex: 1; display: flex; flex-direction: column; }
  header { height: 96px; display: flex; align-items: center; padding-right: 24px; color: #5f6368; }
  .brand { width: 384px; padding-left: 35px; display: flex; align-items: center; font-size: 32px; color: #444746; }
  .brand span { margin-left: 15.5px; }
  .search { width: 781px; height: 72px; border-radius: 36px; background: #e9eef6; display: flex; align-items: center; padding: 0 24px 0 18px; color: #444746; }
  .ph { margin: 0 auto 0 12px; font-size: 23px; color: #5d6063; letter-spacing: -.1px; }
  .status { width: 152px; height: 72px; margin-left: 45px; border-radius: 36px; background: #e9eef6; display: flex; align-items: center; padding-left: 18px; font-size: 20px; font-weight: 500; color: #1f1f1f; letter-spacing: .1px; }
  .status i { width: 18px; height: 18px; border-radius: 50%; background: #1e8e3e; margin-right: 12px; }
  .status span { margin-right: 13px; padding-top: 3px; }
  .tools { display: flex; gap: 30px; margin: 0 0 0 33px; }
  .account { width: 201px; height: 72px; margin-left: auto; border: 1.5px solid #dadce0; border-radius: 12px; background: #fff; display: flex; align-items: center; justify-content: space-between; padding: 2px 8px 0 12px; }
  .logo { font: bold 38px "Liberation Serif", serif; fill: #000; }
  .it { fill: #fff; }
  .tagline { font: bold 13.5px "Open Sans", sans-serif; fill: #222; }
  .avatar { width: 48px; height: 48px; border-radius: 50%; background: #78909c; color: #fff; font-size: 26px; line-height: 48px; text-align: center; }

  /* Folders */
  .columns { display: flex; }
  aside { width: 384px; padding: 12px 18px 0; }
  .compose { width: 208px; height: 72px; margin-bottom: 24px; border-radius: 24px; background: #c2e7ff; display: flex; align-items: center; padding-left: 24px; font-size: 20px; font-weight: 500; letter-spacing: .3px; color: #001d35; }
  .compose span { margin-left: 24px; }
  .folder { width: 348px; height: 36px; border-radius: 18px; display: flex; align-items: center; padding: 0 18px 0 24px; font-size: 20px; color: #303030; }
  .ficon { width: 30px; margin-right: 24px; display: grid; place-items: center; color: #444746; }
  .fname { letter-spacing: -.1px; }
  .fcount { margin-left: auto; font-size: 16.5px; color: #5d6063; }
  .bold .fname { font-weight: 700; color: #1f1f1f; letter-spacing: .3px; }
  .selected { background: #d3e3fd; }
  .selected .ficon { color: #041e49; }
  .selected .fname, .selected .fcount { color: #001d35; font-weight: 700; }
  .labels { margin-top: 39px; height: 36px; display: flex; align-items: center; justify-content: space-between; padding: 0 12px 0 21px; font-size: 23.5px; font-weight: 500; color: #1f1f1f; }
  .labels :global(svg) { color: #444746; }

  /* Message card */
  .card { width: 1410px; height: 758px; background: #fff; border-radius: 24px; overflow: hidden; color: #444746; }
  .toolbar { height: 72px; display: flex; align-items: center; padding-left: 6px; }
  .tb { width: 66px; display: grid; place-items: center; }
  .first { margin-right: 18px; }
  .narrow { width: 54px; }
  .vsep { width: 1.5px; height: 30px; background: #e4e5e7; margin: 0 11.25px; }
  .vsep + .tb { margin-left: 0; }
  .pos { margin-left: auto; font-size: 17px; color: #5e5e5e; }
  .pg { width: 60px; display: grid; place-items: center; }
  .pos + .pg { margin-left: 14px; }
  .kbd { margin: 4px 11px 0 13px; }
  .kbdmenu { margin-right: 57px; }
  .mail { height: 686px; display: flex; }
  .content { width: 1393px; padding-left: 24px; }
  .scroll { width: 17px; height: 530px; background: #c8c8c8; border-left: 1px solid #b4b4b4; }
  .subject { height: 102px; display: flex; align-items: center; padding: 0 31px 0 84px; }
  h1 { margin: 0; font-size: 31px; font-weight: 400; color: #1f1f1f; }
  .chip { width: 76px; height: 27px; margin-left: 14px; border-radius: 6px; background: #dfe1df; display: flex; align-items: center; gap: 8px; padding-left: 7px; font-size: 17px; }
  .chip svg { margin-top: 3px; }
  .subicons { margin-left: auto; display: flex; gap: 24px; }
  .sender { display: flex; height: 60px; }
  .person { width: 60px; height: 60px; border-radius: 50%; border: 1.5px solid #e2e2e2; background: #f4f4f4; display: grid; place-items: center; margin-right: 24px; }
  .line { height: 30px; display: flex; align-items: center; font-size: 17px; color: #5e5e5e; }
  .line b { font-size: 21px; color: #1f1f1f; }
  .line u { margin: 0 5px; color: #222; letter-spacing: -.2px; }
  .addr { letter-spacing: .03px; }
  .to svg { margin: 2px 0 0 9px; }
  .meta { height: 30px; margin-left: auto; display: flex; align-items: center; padding-right: 32.5px; font-size: 17px; color: #5e5e5e; }
  .meta span { letter-spacing: -.12px; margin-right: 31px; }
  .meta :global(svg) { color: #444746; margin-right: 32px; }
  .meta :global(svg:last-child) { margin-right: 0; }
  .text { padding: 11px 0 0 84px; font: 19.5px/29.25px "Liberation Sans", Arial, sans-serif; color: #222; }
  .text p { margin: 0; height: 29.25px; white-space: pre; }
  .panel { position: absolute; left: 1884px; top: 806px; width: 60px; height: 60px; border-radius: 50%; background: #fff; box-shadow: 0 1px 4px rgba(0, 0, 0, .45); display: flex; align-items: center; padding-left: 16px; }

  /* Taskbar */
  .taskbar { height: 72px; flex: none; position: relative; display: flex; align-items: center; padding-left: 602px; font-family: "Open Sans", sans-serif; color: #111;
    background: radial-gradient(90px 60px at 765px 10px, #eee8a8 0, rgba(238, 232, 168, 0) 100%),
      linear-gradient(90deg, #e7e5ee 0, #e4e4f1 280px, #f7e8d5 345px, #f6e7d2 650px, #f1e6c2 760px, #f6e4d2 900px, #efddd1 1060px, #eedad0 1340px, #f8e2dc 1420px, #f8e4da 1640px, #f8e2df 1770px, #ece0ee 1805px, #e2e7f4 1835px, #e0e6f4 1920px); }
  .topline { position: absolute; left: 0; top: 0; width: 1502px; height: 2px; background: rgba(150, 120, 120, .18); }
  .apps { display: flex; gap: 10px; padding-top: 2px; flex: none; }
  .app { width: 56px; height: 57px; display: flex; align-items: center; justify-content: center; border-radius: 5px; position: relative; }
  .app i { position: absolute; left: 24px; bottom: 0; width: 9px; height: 5px; border-radius: 3px; background: #86786f; }
  .current { background: rgba(255, 255, 255, .55); box-shadow: 0 1px 1px rgba(120, 90, 80, .35); }
  .current i { left: 16px; width: 24px; background: #26809a; }
  .av { font-family: Inter, sans-serif; fill: #e9eef0; text-anchor: middle; }
  .tray { margin-left: auto; height: 72px; padding-right: 6px; border-right: 2px solid #b3b4c6; margin-right: 6px; display: flex; align-items: center; font-size: 17px; }
  .vol { margin-left: 15px; }
  .sync { margin-left: 11px; }
  .wifi { margin: 2px 0 0 15px; }
  .battery { margin: 0 0 0 14px; }
  .lang { width: 34px; margin-left: 16px; display: flex; flex-direction: column; align-items: center; font-size: 16.3px; line-height: 27px; }
  .when { width: 84px; margin-left: 20px; display: flex; flex-direction: column; align-items: center; line-height: 32px; }
  .date { font-size: 17.2px; }
  .note { margin: 4px 12px 0 28px; }
  .cnt { font: 600 17px "Open Sans", sans-serif; text-anchor: middle; fill: #111; }
</style>
